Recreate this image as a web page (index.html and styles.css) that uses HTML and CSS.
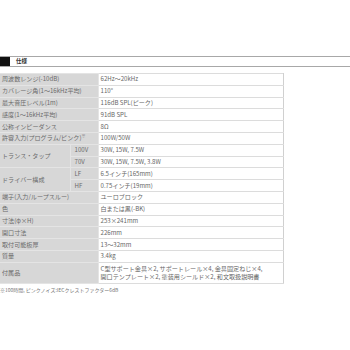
FILE: index.html
```html
<!DOCTYPE html>
<html lang="ja">
<head>
<meta charset="utf-8">
<link rel="stylesheet" href="styles.css">
</head>
<body>
<div class="page">
  <div class="heading"><span class="mark"></span><span class="title">仕様</span></div>
  <table class="spec">
    <colgroup><col class="c1"><col class="c2"><col class="c3"></colgroup>
    <tr><th colspan="2">周波数レンジ(-10dB)</th><td>62Hz～20kHz</td></tr>
    <tr><th colspan="2">カバレージ角(1～16kHz平均)</th><td>110°</td></tr>
    <tr><th colspan="2">最大音圧レベル(1m)</th><td>116dB SPL(ピーク)</td></tr>
    <tr><th colspan="2">感度(1～16kHz平均)</th><td>91dB SPL</td></tr>
    <tr><th colspan="2">公称インピーダンス</th><td>8Ω</td></tr>
    <tr><th colspan="2">許容入力(プログラム/ピンク)<sup>※</sup></th><td>100W/50W</td></tr>
    <tr><th rowspan="2">トランス・タップ</th><th class="sub">100V</th><td>30W, 15W, 7.5W</td></tr>
    <tr><th class="sub">70V</th><td>30W, 15W, 7.5W, 3.8W</td></tr>
    <tr><th rowspan="2">ドライバー構成</th><th class="sub">LF</th><td>6.5インチ(165mm)</td></tr>
    <tr><th class="sub">HF</th><td>0.75インチ(19mm)</td></tr>
    <tr><th colspan="2">端子(入力/ループスルー)</th><td>ユーロブロック</td></tr>
    <tr><th colspan="2">色</th><td>白または黒(-BK)</td></tr>
    <tr><th colspan="2">寸法(φ×H)</th><td>253×241mm</td></tr>
    <tr><th colspan="2">開口寸法</th><td>226mm</td></tr>
    <tr><th colspan="2">取付可能板厚</th><td>13～32mm</td></tr>
    <tr><th colspan="2">質量</th><td>3.4kg</td></tr>
    <tr class="tall"><th colspan="2">付属品</th><td>C型サポート金具×2, サポートレール×4, 金具固定ねじ×4,<br>開口テンプレート×2, 塗装用シールド×2, 和文取扱説明書</td></tr>
  </table>
  <p class="note">※100時間, ピンクノイズ:IECクレストファクター6dB</p>
</div>
</body>
</html>
```

FILE: styles.css
```css
html, body {
  margin: 0;
  padding: 0;
  background: #fff;
}
body {
  font-family: "Noto Sans CJK JP", "Noto Sans", sans-serif;
  color: #666;
}
.page {
  padding-top: 56px;
}
.heading {
  display: flex;
  align-items: center;
  height: 9px;
  border-top: 1px solid #a8a8a8;
  border-bottom: 1px solid #a8a8a8;
}
.mark {
  width: 10px;
  height: 9px;
  background: #111;
}
.title {
  margin-left: 6px;
  font-size: 5.6px;
  font-weight: bold;
  color: #333;
  line-height: 9px;
}
.spec {
  margin-top: 6px;
  width: 284px;
  border-collapse: collapse;
  font-size: 6.1px;
  table-layout: fixed;
}
.c1 { width: 70px; }
.c2 { width: 28px; }
.spec tr {
  height: 11.8px;
}
.spec th, .spec td {
  height: auto;
  padding: 0 2px;
  line-height: 8px;
  border: 1px solid #dcdcdc;
  text-align: left;
  font-weight: normal;
  white-space: nowrap;
  vertical-align: middle;
}
.spec th {
  background: #d7d7d7;
  color: #6a6a6a;
  border-color: #e4e4e4;
  border-left: none;
}
.spec td {
  color: #666;
  border-right: 1px solid #d0d0d0;
}
.spec th.sub {
  padding-left: 4px;
}
.spec sup {
  font-size: 4px;
  vertical-align: 2px;
  line-height: 0;
}
.spec .tall {
  height: 21px;
}
.note {
  margin: 2px 0 0;
  font-size: 5px;
  color: #777;
  line-height: 7px;
}
```
